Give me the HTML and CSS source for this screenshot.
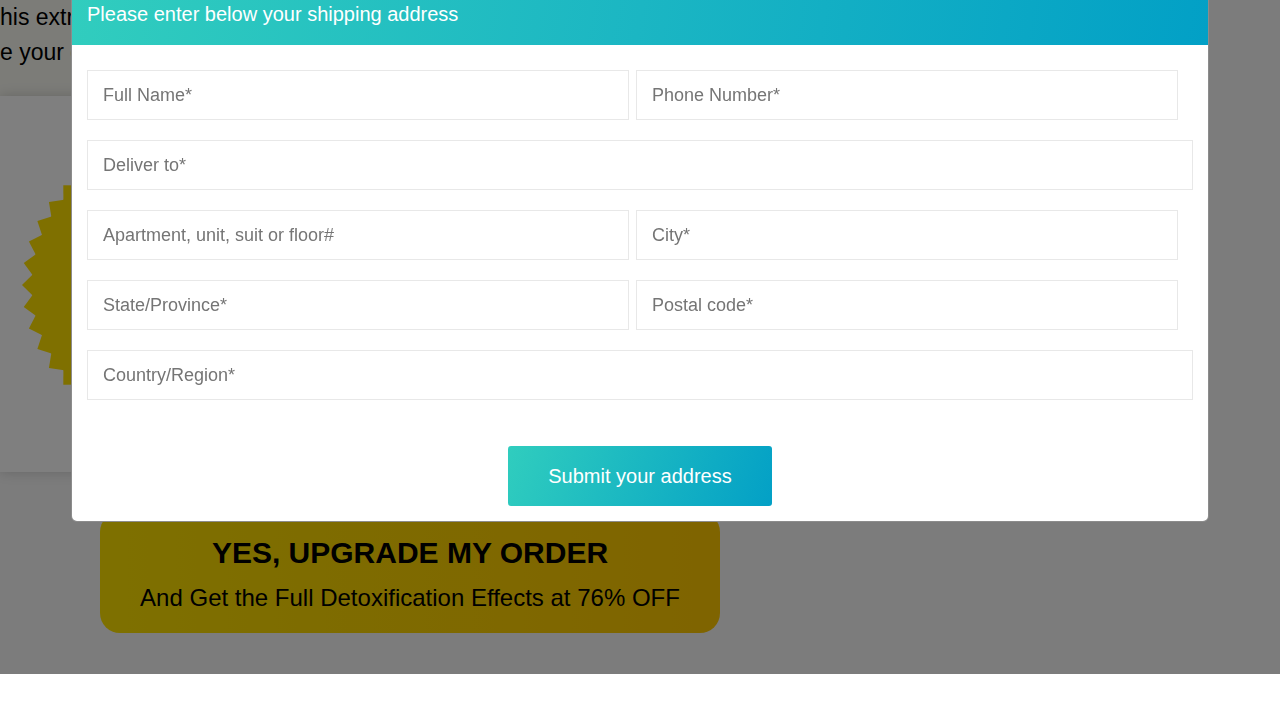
FILE: index.html
```html
<!DOCTYPE html>
<html lang="en">
<head>
<meta charset="utf-8">
<title>Shipping address</title>
<link rel="stylesheet" href="styles.css">
</head>
<body>
<div class="page">
  <div class="intro">
    <p class="intro-line">his extra special offer</p>
    <p class="intro-line">e your order</p>
  </div>
  <div class="card">
    <svg class="burst" width="282" height="282" viewBox="-141 -141 282 282" aria-hidden="true">
      <defs>
        <polygon id="tooth" points="124,-16.8 141,0 124,16.8"/>
      </defs>
      <g fill="#ffe100">
        <circle r="131"/>
        <use href="#tooth" transform="rotate(0)"/><use href="#tooth" transform="rotate(9)"/><use href="#tooth" transform="rotate(18)"/><use href="#tooth" transform="rotate(27)"/><use href="#tooth" transform="rotate(36)"/><use href="#tooth" transform="rotate(45)"/><use href="#tooth" transform="rotate(54)"/><use href="#tooth" transform="rotate(63)"/><use href="#tooth" transform="rotate(72)"/><use href="#tooth" transform="rotate(81)"/>
        <use href="#tooth" transform="rotate(90)"/><use href="#tooth" transform="rotate(99)"/><use href="#tooth" transform="rotate(108)"/><use href="#tooth" transform="rotate(117)"/><use href="#tooth" transform="rotate(126)"/><use href="#tooth" transform="rotate(135)"/><use href="#tooth" transform="rotate(144)"/><use href="#tooth" transform="rotate(153)"/><use href="#tooth" transform="rotate(162)"/><use href="#tooth" transform="rotate(171)"/>
        <use href="#tooth" transform="rotate(180)"/><use href="#tooth" transform="rotate(189)"/><use href="#tooth" transform="rotate(198)"/><use href="#tooth" transform="rotate(207)"/><use href="#tooth" transform="rotate(216)"/><use href="#tooth" transform="rotate(225)"/><use href="#tooth" transform="rotate(234)"/><use href="#tooth" transform="rotate(243)"/><use href="#tooth" transform="rotate(252)"/><use href="#tooth" transform="rotate(261)"/>
        <use href="#tooth" transform="rotate(270)"/><use href="#tooth" transform="rotate(279)"/><use href="#tooth" transform="rotate(288)"/><use href="#tooth" transform="rotate(297)"/><use href="#tooth" transform="rotate(306)"/><use href="#tooth" transform="rotate(315)"/><use href="#tooth" transform="rotate(324)"/><use href="#tooth" transform="rotate(333)"/><use href="#tooth" transform="rotate(342)"/><use href="#tooth" transform="rotate(351)"/>
      </g>
    </svg>
  </div>
  <div class="cta">
    <div class="cta-title">YES, UPGRADE MY ORDER</div>
    <div class="cta-sub">And Get the Full Detoxification Effects at 76% OFF</div>
  </div>
</div>

<div class="overlay"></div>

<div class="modal">
  <div class="modal-header">Please enter below your shipping address</div>
  <form class="modal-body">
    <div class="row two">
      <input class="field" type="text" placeholder="Full Name*">
      <input class="field" type="text" placeholder="Phone Number*">
    </div>
    <div class="row">
      <input class="field" type="text" placeholder="Deliver to*">
    </div>
    <div class="row two">
      <input class="field" type="text" placeholder="Apartment, unit, suit or floor#">
      <input class="field" type="text" placeholder="City*">
    </div>
    <div class="row two">
      <input class="field" type="text" placeholder="State/Province*">
      <input class="field" type="text" placeholder="Postal code*">
    </div>
    <div class="row">
      <input class="field" type="text" placeholder="Country/Region*">
    </div>
    <div class="actions">
      <button class="submit" type="button">Submit your address</button>
    </div>
  </form>
</div>
</body>
</html>
```

FILE: styles.css
```css
html, body {
  margin: 0;
  padding: 0;
}

body {
  width: 1280px;
  height: 720px;
  overflow: hidden;
  background: #ffffff;
  font-family: "Liberation Sans", Arial, sans-serif;
  color: #000;
}

.page {
  height: 674px;
  background: #f8f8f8;
  display: flex;
  flex-direction: column;
  align-items: flex-start;
}

.intro {
  width: 1100px;
  height: 96px;
  background: #f8f8f1;
  font-size: 23px;
  line-height: 35px;
}

.intro-line {
  margin: 0;
  white-space: nowrap;
}

.card {
  width: 1100px;
  height: 376px;
  background: #ffffff;
  box-shadow: 0 0 12px rgba(0, 0, 0, 0.18);
  display: flex;
  align-items: flex-start;
}

.burst {
  display: block;
  margin: 48px 0 0 22px;
}

.cta {
  margin: 40px 0 0 100px;
  width: 620px;
  height: 121px;
  box-sizing: border-box;
  padding-top: 23px;
  border-radius: 20px;
  background: linear-gradient(90deg, #fce100, #ffc800);
  text-align: center;
}

.cta-title {
  font-size: 30px;
  font-weight: bold;
  line-height: 36px;
}

.cta-sub {
  margin-top: 12px;
  font-size: 24px;
  line-height: 30px;
}

.overlay {
  position: fixed;
  top: 0;
  left: 0;
  width: 1280px;
  height: 674px;
  background: rgba(0, 0, 0, 0.5);
}

.modal {
  position: fixed;
  top: -15px;
  left: 71px;
  width: 1138px;
  box-sizing: border-box;
  background: #ffffff;
  border: 1px solid rgba(0, 0, 0, 0.45);
  border-radius: 6px;
  overflow: hidden;
}

.modal-header {
  padding: 14px 15px 16px;
  font-size: 20px;
  line-height: 29px;
  color: #ffffff;
  background: linear-gradient(100deg, #31cdbe 0%, #1bb6c3 50%, #02a0c6 100%);
}

.modal-body {
  margin: 0;
  padding: 25px 15px 15px;
  display: flex;
  flex-direction: column;
  gap: 20px;
}

.row {
  display: flex;
}

.row.two {
  display: grid;
  grid-template-columns: 542px 542px;
  column-gap: 7px;
}

.field {
  display: block;
  width: 100%;
  height: 50px;
  box-sizing: border-box;
  margin: 0;
  padding: 0 15px;
  border: 1px solid #e8e8e8;
  border-radius: 0;
  background: #ffffff;
  font-family: "Liberation Sans", Arial, sans-serif;
  font-size: 18px;
  color: #333;
  outline: none;
}

.field::placeholder {
  color: #757575;
  opacity: 1;
}

.actions {
  display: flex;
  justify-content: center;
  margin-top: 26px;
}

.submit {
  width: 264px;
  height: 60px;
  border: none;
  border-radius: 3px;
  background: linear-gradient(110deg, #30cdbe 0%, #03a0c6 100%);
  color: #ffffff;
  font-family: "Liberation Sans", Arial, sans-serif;
  font-size: 20px;
  cursor: pointer;
}
```
